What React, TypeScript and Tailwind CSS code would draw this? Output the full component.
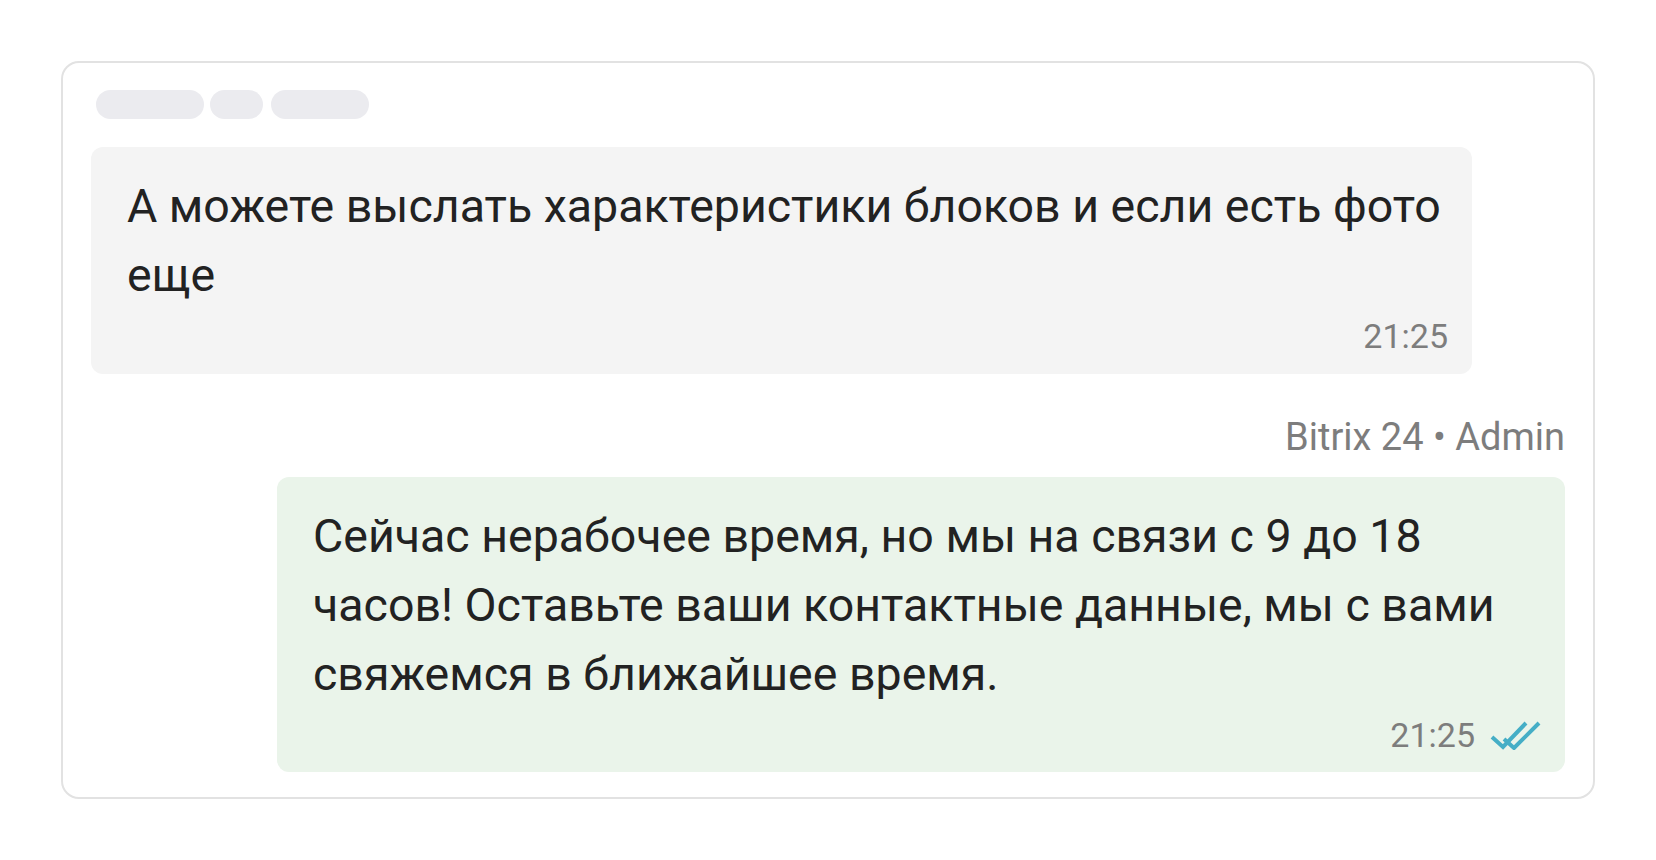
import React from 'react'

function DoubleCheck() {
  return (
    <svg width="52" height="30" viewBox="0 0 52 30" fill="none" className="ml-[14px]">
      <path d="M3 17 L14 27 L37 3" stroke="#45aec6" strokeWidth="4" />
      <path d="M15 19 L25 28 L50 3" stroke="#45aec6" strokeWidth="4" />
    </svg>
  )
}

export default function App() {
  return (
    <div className="bg-white p-[61px]" style={{ fontFamily: 'Roboto, "Noto Sans", sans-serif' }}>
      <div className="rounded-[18px] border-2 border-[#e2e2e2] bg-white px-[28px] pt-[27px] pb-[25px]">
        {/* loading pills */}
        <div className="ml-[5px] flex">
          <div className="h-[29px] w-[108px] rounded-full bg-[#ebebef]" />
          <div className="ml-[6px] h-[29px] w-[53px] rounded-full bg-[#ebebef]" />
          <div className="ml-[8px] h-[29px] w-[98px] rounded-full bg-[#ebebef]" />
        </div>

        {/* incoming message */}
        <div className="mt-[28px] w-[1381px] rounded-[12px] bg-[#f4f4f4] pt-[25px] pb-[18px] pl-[36px] pr-[8px]">
          <p className="text-[46.5px] leading-[69px] text-[#222222]">
            А можете выслать характеристики блоков и если есть фото еще
          </p>
          <div className="mt-[6px] mr-[16px] text-right text-[34px] leading-[40px] text-[#7d7d7d]">21:25</div>
        </div>

        {/* outgoing message */}
        <div className="mt-[41px] text-right text-[38px] leading-[44px] text-[#7d7d7d]">
          Bitrix 24 • Admin
        </div>
        <div className="mt-[18px] ml-auto w-[1288px] rounded-[12px] bg-[#eaf4ea] pt-[25px] pb-[17px] pl-[36px] pr-[24px]">
          <p className="pr-[16px] text-[46.5px] leading-[69px] text-[#222222]">
            Сейчас нерабочее время, но мы на связи с 9 до 18 часов! Оставьте ваши контактные данные, мы с вами свяжемся в ближайшее время.
          </p>
          <div className="mt-[6px] flex items-center justify-end">
            <span className="text-[34px] leading-[40px] text-[#7d7d7d]">21:25</span>
            <DoubleCheck />
          </div>
        </div>
      </div>
    </div>
  )
}
